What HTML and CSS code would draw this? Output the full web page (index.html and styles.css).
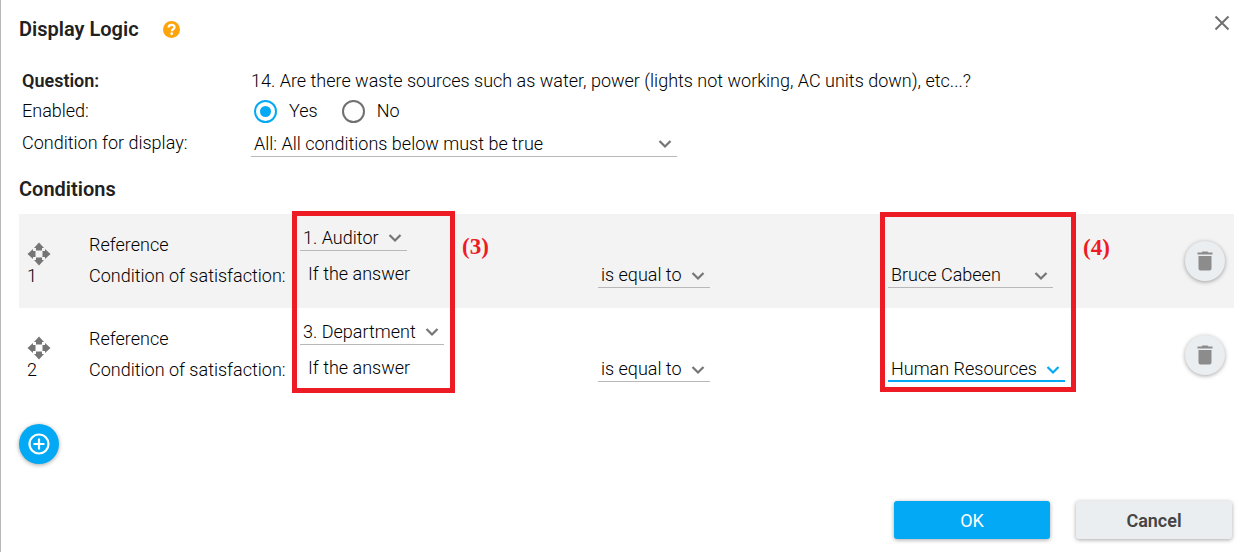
FILE: index.html
```html
<!DOCTYPE html>
<html lang="en">
<head>
<meta charset="utf-8">
<title>Display Logic</title>
<link rel="stylesheet" href="styles.css">
</head>
<body>
<svg class="sprite" aria-hidden="true">
  <symbol id="chevron" viewBox="0 0 14 10"><path d="M1.500 2 7 7.500 12.500 2" fill="none" stroke="currentColor" stroke-width="2.200"/></symbol>
  <symbol id="move" viewBox="0 0 24 24"><path d="M12 .5 17 6H15V8.500H9V6H7zM12 23.500 17 18H15V15.500H9v2.500H7zM.5 12 6 7V9H8.500v6H6v2zM23.500 12 18 7V9H15.500v6h2.500v2z" fill="currentColor"/></symbol>
  <symbol id="trash" viewBox="0 0 16 20"><path d="M.5 1.500H4.500L5.500.5h5l1 1h4v2H.5zM1.500 5h13v12.500a2 2 0 0 1-2 2h-9a2 2 0 0 1-2-2z" fill="currentColor"/></symbol>
</svg>
<main class="dialog">
  <header class="dialog-header">
    <h1 class="title">Display Logic</h1>
    <button class="help" type="button" aria-label="Help">
      <svg width="17" height="17" viewBox="0 0 16 16"><circle cx="8" cy="8" r="8" fill="#ffa30a"/><path d="M5.300 6.200C5.300 4.500 6.500 3.600 8.100 3.600s2.700.9 2.700 2.300c0 1.800-2.500 1.900-2.500 3.700" fill="none" stroke="#fff" stroke-width="2.200"/><circle cx="8.200" cy="12" r="1.300" fill="#fff"/></svg>
    </button>
    <button class="close" type="button" aria-label="Close">
      <svg width="16" height="16" viewBox="0 0 16 16"><path d="M1.500 1.500 14.500 14.500M14.500 1.500 1.500 14.500" stroke="#707070" stroke-width="2"/></svg>
    </button>
  </header>

  <div class="form">
    <span class="strong">Question:</span>
    <span>14. Are there waste sources such as water, power (lights not working, AC units down), etc...?</span>
    <span id="enabled-label">Enabled:</span>
    <div class="radios" role="radiogroup" aria-labelledby="enabled-label">
      <label class="radio"><input type="radio" name="enabled" checked>Yes</label>
      <label class="radio"><input type="radio" name="enabled">No</label>
    </div>
    <label for="display">Condition for display:</label>
    <span class="select select-wide"><select id="display"><option>All: All conditions below must be true</option></select><svg class="chevron"><use href="#chevron"/></svg></span>
  </div>

  <h2 class="title">Conditions</h2>
  <div class="conditions">
    <section class="condition">
      <div class="order"><svg class="move"><use href="#move"/></svg><span>1</span></div>
      <div class="labels"><label for="ref1">Reference</label><label for="op1">Condition of satisfaction:</label></div>
      <div class="reference">
        <span class="select"><select id="ref1"><option>1. Auditor</option></select><svg class="chevron"><use href="#chevron"/></svg></span>
        <span class="answer">If the answer</span>
      </div>
      <span class="select"><select id="op1"><option>is equal to</option></select><svg class="chevron"><use href="#chevron"/></svg></span>
      <span class="select select-person"><select aria-label="Value"><option>Bruce Cabeen</option></select><svg class="chevron"><use href="#chevron"/></svg></span>
      <button class="round delete" type="button" aria-label="Delete condition 1"><svg class="trash"><use href="#trash"/></svg></button>
    </section>
    <section class="condition">
      <div class="order"><svg class="move"><use href="#move"/></svg><span>2</span></div>
      <div class="labels"><label for="ref2">Reference</label><label for="op2">Condition of satisfaction:</label></div>
      <div class="reference">
        <span class="select"><select id="ref2"><option>3. Department</option></select><svg class="chevron"><use href="#chevron"/></svg></span>
        <span class="answer">If the answer</span>
      </div>
      <span class="select"><select id="op2"><option>is equal to</option></select><svg class="chevron"><use href="#chevron"/></svg></span>
      <span class="select active"><select aria-label="Value"><option>Human Resources</option></select><svg class="chevron"><use href="#chevron"/></svg></span>
      <button class="round delete" type="button" aria-label="Delete condition 2"><svg class="trash"><use href="#trash"/></svg></button>
    </section>
    <div class="frame frame-reference"><span class="callout">(3)</span></div>
    <div class="frame frame-value"><span class="callout">(4)</span></div>
  </div>

  <button class="round add" type="button" aria-label="Add condition">
    <svg width="22" height="22" viewBox="0 0 22 22"><circle cx="11" cy="11" r="9.500" fill="none" stroke="#fff" stroke-width="2.200"/><path d="M11 5.500v11M5.500 11h11" stroke="#fff" stroke-width="2.200"/></svg>
  </button>

  <footer class="actions">
    <button class="action primary" type="button">OK</button>
    <button class="action" type="button">Cancel</button>
  </footer>
</main>
</body>
</html>
```
FILE: styles.css
```css
* { box-sizing: border-box; }

body {
  margin: 0;
  background: #fff;
  color: #000;
  font: 300 18px/24px Roboto, "Liberation Sans", sans-serif;
}

button {
  margin: 0;
  padding: 0;
  border: 0;
  background: none;
  font: inherit;
  cursor: pointer;
}

.sprite { display: none; }

.dialog {
  min-height: 100vh;
  padding: 15px 18px 12px;
  border-left: 1px solid #b8b8b8;
}

.dialog-header {
  display: flex;
  align-items: flex-start;
}

.title {
  margin: 0;
  color: #212121;
  font-size: 20px;
  line-height: 28px;
  font-weight: 600;
}

.help {
  display: flex;
  margin: 6px 0 0 24px;
}

.close {
  display: flex;
  margin: 0 4px 0 auto;
}

.form {
  display: grid;
  grid-template-columns: 229px 1fr;
  grid-template-rows: 28px 32px 32px;
  align-items: center;
  margin: 24px 0 16px 3px;
}

.strong {
  color: #212121;
  font-weight: 600;
}

.radios {
  display: flex;
  gap: 24px;
  padding-left: 3px;
}

.radio {
  display: flex;
  align-items: center;
  gap: 12px;
}

.radio input {
  appearance: none;
  display: grid;
  place-items: center;
  width: 23px;
  height: 23px;
  margin: 0;
  border: 2px solid #707070;
  border-radius: 50%;
}

.radio input:checked { border-color: #03a9f4; }

.radio input:checked::before {
  content: "";
  width: 11px;
  height: 11px;
  border-radius: 50%;
  background: #03a9f4;
}

.select {
  display: inline-grid;
  justify-self: start;
  align-items: center;
  color: #757575;
}

.select select,
.chevron { grid-area: 1 / 1; }

.select select {
  appearance: none;
  width: 100%;
  height: 27px;
  margin: 0;
  padding: 2px 28px 0 3px;
  border: 0;
  border-bottom: 1px solid #b8b8b8;
  border-radius: 0;
  outline: 0;
  background: none;
  color: #000;
  font: inherit;
}

.chevron {
  justify-self: end;
  width: 14px;
  height: 10px;
  margin: 2px 5px 0 0;
  pointer-events: none;
}

.select-wide { width: 426px; }
.select-person { width: 165px; }
.active { color: #03a9f4; }
.active select { border-bottom: 2px solid #03a9f4; }

.conditions {
  position: relative;
  margin-top: 11px;
}

.condition {
  display: grid;
  grid-template-columns: 70px 211px 298px 290px 1fr 49px;
  align-items: center;
  height: 94px;
}

.condition:first-child { background: #f3f3f3; }

.order {
  display: flex;
  flex-direction: column;
  padding: 6px 0 0 8px;
  line-height: 20px;
}

.move {
  width: 24px;
  height: 24px;
  color: #757575;
}

.labels {
  display: grid;
  gap: 7px;
  padding-bottom: 2px;
}

.reference {
  display: grid;
  gap: 11px;
  padding-bottom: 13px;
}

.answer { padding-left: 8px; }

.condition > .select { margin-top: 27px; }

.round {
  display: grid;
  place-items: center;
  width: 40px;
  height: 40px;
  border-radius: 50%;
  box-shadow: 0 1px 4px rgba(0, 0, 0, 0.35);
}

.delete {
  background: #eaeef1;
  color: #8c8c8c;
}

.trash {
  width: 16px;
  height: 20px;
}

.add {
  margin-top: 22px;
  background: #03a9f4;
}

.frame {
  position: absolute;
  border: 5px solid #ed1c24;
  pointer-events: none;
}

.frame-reference {
  top: -3px;
  left: 273px;
  width: 163px;
  height: 182px;
}

.frame-value {
  top: -2px;
  left: 861px;
  width: 196px;
  height: 180px;
}

.callout {
  position: absolute;
  top: 18px;
  left: calc(100% + 12px);
  color: #ed1c24;
  font: bold 23px/26px "Liberation Serif", serif;
}

.actions {
  display: flex;
  justify-content: flex-end;
  gap: 26px;
  margin-top: 37px;
  padding-right: 2px;
}

.action {
  width: 156px;
  height: 38px;
  padding-top: 2px;
  border-radius: 3px;
  background: #eaeef1;
  box-shadow: 0 1px 4px rgba(0, 0, 0, 0.35);
  color: #444;
  font-weight: 600;
}

.primary {
  background: #03a9f4;
  color: #fff;
  font-weight: 400;
}
```
